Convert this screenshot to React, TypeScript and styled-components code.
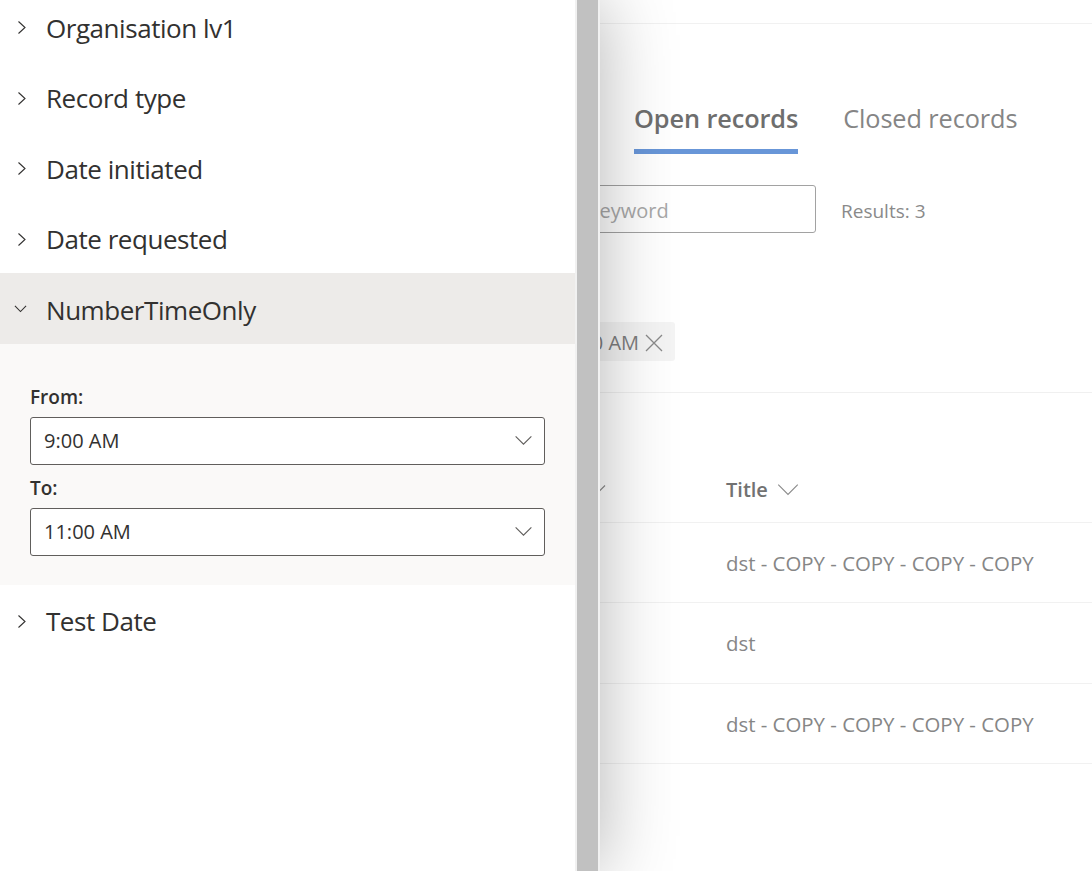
import React from "react";
import styled, { createGlobalStyle } from "styled-components";

const Global = createGlobalStyle`
  html, body { margin: 0; padding: 0; }
  body {
    font-family: "Open Sans", "Noto Sans", sans-serif;
    background: #ffffff;
    overflow: hidden;
  }
`;

const Stage = styled.div`
  position: relative;
  width: 1092px;
  height: 871px;
  overflow: hidden;
  background: #ffffff;
`;

/* ---------- background page (dimmed behind the panel) ---------- */

const Page = styled.main`
  display: flex;
  flex-direction: column;
  height: 100%;
`;

const TopBar = styled.div`
  height: 23px;
  border-bottom: 1px solid #f1f1f1;
`;

const Content = styled.div`
  display: flex;
  flex-direction: column;
  padding-left: 480px;
`;

const TabList = styled.div`
  display: flex;
  gap: 45px;
  margin-top: 77px;
  margin-left: 154px;
`;

const Tab = styled.div<{ $active?: boolean }>`
  display: flex;
  flex-direction: column;
  align-items: stretch;
  gap: 13px;
  font-size: 25.3px;
  line-height: 35px;
  font-weight: ${(p) => (p.$active ? 600 : 400)};
  color: ${(p) => (p.$active ? "#6e6e6e" : "#858585")};
  letter-spacing: -0.1px;

  &::after {
    content: "";
    height: 5px;
    background: ${(p) => (p.$active ? "#6896d8" : "transparent")};
  }
`;

const SearchRow = styled.div`
  display: flex;
  align-items: center;
  margin-top: 31px;
`;

const SearchBox = styled.div`
  box-sizing: border-box;
  width: 336px;
  height: 48px;
  border: 1px solid #a2a2a2;
  border-radius: 3px;
  display: flex;
  align-items: center;
  padding-left: 12px;
  padding-top: 2px;
  font-size: 20px;
  color: #a8a8a8;
`;

const Results = styled.div`
  margin-left: 25px;
  margin-top: 3px;
  font-size: 19px;
  color: #8a8a8a;
`;

const ChipRow = styled.div`
  display: flex;
  margin-top: 89px;
  margin-left: -32px;
`;

const Chip = styled.div`
  display: flex;
  align-items: center;
  gap: 6px;
  height: 39px;
  padding: 2px 12px 0 12px;
  box-sizing: border-box;
  background: #f4f4f4;
  border-radius: 3px;
  font-size: 20px;
  color: #7e7e7e;
`;

const Divider = styled.div`
  height: 1px;
  background: #f0f0f0;
  margin-top: 31px;
`;

const Table = styled.div`
  display: flex;
  flex-direction: column;
  margin-top: 66px;
  padding-left: 480px;
`;

const HeaderRow = styled.div`
  display: grid;
  grid-template-columns: 246px 1fr;
  height: 64px;
  align-items: center;
  border-bottom: 1px solid #f1f1f1;
  box-sizing: border-box;
  padding-bottom: 2px;
`;

const HeaderCell = styled.div`
  display: flex;
  align-items: center;
  gap: 8px;
  font-size: 20px;
  font-weight: 600;
  color: #727272;
`;

const FirstHeaderCell = styled(HeaderCell)`
  justify-content: flex-end;
  padding-right: 119px;
`;

const Row = styled.div`
  display: grid;
  grid-template-columns: 246px 1fr;
  height: 80.3px;
  align-items: center;
  border-bottom: 1px solid #f1f1f1;
  box-sizing: border-box;
  padding-top: 1px;
  font-size: 20.4px;
  color: #868686;
`;

/* ---------- overlay panel ---------- */

const Panel = styled.aside`
  position: absolute;
  left: 0;
  top: 0;
  width: 600px;
  height: 871px;
  display: flex;
  background: #ffffff;
  box-shadow: 0 0 70px rgba(0, 0, 0, 0.3);
  z-index: 2;
`;

const PanelBody = styled.div`
  width: 575px;
  overflow: hidden;
  display: flex;
  flex-direction: column;
`;

const FilterList = styled.div`
  display: flex;
  flex-direction: column;
  margin-top: -9px;
`;

const Section = styled.div`
  display: flex;
  flex-direction: column;
`;

const SectionHeader = styled.div<{ $open?: boolean }>`
  height: 70.5px;
  display: flex;
  align-items: center;
  padding-left: 14px;
  background: ${(p) => (p.$open ? "#edebe9" : "transparent")};
  font-size: 26px;
  letter-spacing: -0.45px;
  color: #323130;
  padding-top: 3px;
  box-sizing: border-box;
`;

const ChevronSlot = styled.span<{ $open?: boolean }>`
  width: 32px;
  display: flex;
  align-items: center;
  justify-content: flex-start;
  padding-left: ${(p) => (p.$open ? "0" : "2px")};
  box-sizing: border-box;
  margin-top: ${(p) => (p.$open ? "-2px" : "0")};
`;

const SectionContent = styled.div`
  background: #faf9f8;
  padding: 40px 30px 29px 30px;
  display: flex;
  flex-direction: column;
`;

const Label = styled.div<{ $spaced?: boolean }>`
  font-size: 19px;
  font-weight: 600;
  color: #323130;
  line-height: 26px;
  margin-bottom: 7px;
  margin-top: ${(p) => (p.$spaced ? "10px" : "0")};
`;

const Select = styled.div`
  box-sizing: border-box;
  height: 48px;
  border: 1px solid #605e5c;
  border-radius: 3px;
  background: #ffffff;
  display: flex;
  align-items: center;
  justify-content: space-between;
  padding: 0 11px 0 13px;
  font-size: 20px;
  color: #323130;
`;

const ScrollTrack = styled.div`
  width: 25px;
  background: #f1f1f1;
  display: flex;
  justify-content: center;
  padding: 0 2px;
  box-sizing: border-box;
`;

const ScrollThumb = styled.div`
  flex: 1;
  background: #c1c1c1;
`;

const ChevronRight = () => (
  <svg width="11" height="15" viewBox="0 0 11 15">
    <path d="M2.5 1.5 L9 7.5 L2.5 13.5" fill="none" stroke="#323130" strokeWidth="1.1" />
  </svg>
);

const ChevronDown = ({ size = 14, color = "#323130" }: { size?: number; color?: string }) => (
  <svg width={size} height={size / 2 + 1} viewBox="0 0 14 8">
    <path d="M1 1 L7 7 L13 1" fill="none" stroke={color} strokeWidth="1.1" vectorEffect="non-scaling-stroke" />
  </svg>
);

const CloseX = () => (
  <svg width="18" height="18" viewBox="0 0 18 18">
    <path d="M1 1 L17 17 M17 1 L1 17" fill="none" stroke="#8a8a8a" strokeWidth="1.3" />
  </svg>
);

const filters = ["Organisation lv1", "Record type", "Date initiated", "Date requested"];
const rows = ["dst - COPY - COPY - COPY - COPY", "dst", "dst - COPY - COPY - COPY - COPY"];

export default function App() {
  return (
    <Stage>
      <Global />
      <Page>
        <TopBar />
        <Content>
          <TabList>
            <Tab $active>Open records</Tab>
            <Tab>Closed records</Tab>
          </TabList>
          <SearchRow>
            <SearchBox>Search by keyword</SearchBox>
            <Results>Results: 3</Results>
          </SearchRow>
          <ChipRow>
            <Chip>
              9:00 AM - 11:00 AM
              <CloseX />
            </Chip>
          </ChipRow>
        </Content>
        <Divider />
        <Table>
          <HeaderRow>
            <FirstHeaderCell>
              Date
              <ChevronDown size={22} color="#8a8a8a" />
            </FirstHeaderCell>
            <HeaderCell>
              Title
              <ChevronDown size={24} color="#8a8a8a" />
            </HeaderCell>
          </HeaderRow>
          {rows.map((t, i) => (
            <Row key={i}>
              <span />
              <span>{t}</span>
            </Row>
          ))}
        </Table>
      </Page>

      <Panel>
        <PanelBody>
          <FilterList>
            {filters.map((f) => (
              <Section key={f}>
                <SectionHeader>
                  <ChevronSlot>
                    <ChevronRight />
                  </ChevronSlot>
                  {f}
                </SectionHeader>
              </Section>
            ))}
            <Section>
              <SectionHeader $open>
                <ChevronSlot $open>
                  <ChevronDown size={13} />
                </ChevronSlot>
                NumberTimeOnly
              </SectionHeader>
              <SectionContent>
                <Label>From:</Label>
                <Select>
                  9:00 AM
                  <ChevronDown size={19} color="#605e5c" />
                </Select>
                <Label $spaced>To:</Label>
                <Select>
                  11:00 AM
                  <ChevronDown size={19} color="#605e5c" />
                </Select>
              </SectionContent>
            </Section>
            <Section>
              <SectionHeader>
                <ChevronSlot>
                  <ChevronRight />
                </ChevronSlot>
                Test Date
              </SectionHeader>
            </Section>
          </FilterList>
        </PanelBody>
        <ScrollTrack>
          <ScrollThumb />
        </ScrollTrack>
      </Panel>
    </Stage>
  );
}
